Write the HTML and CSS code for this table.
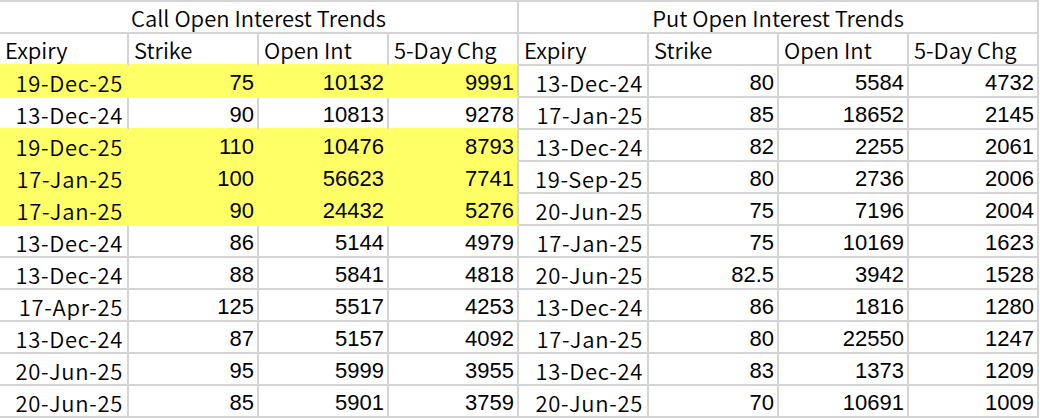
FILE: index.html
```html
<!DOCTYPE html>
<html>
<head>
<meta charset="utf-8">
<link rel="stylesheet" href="styles.css">
</head>
<body>
<div class="sheet">
  <div class="cell title">Call Open Interest Trends</div>
  <div class="cell title">Put Open Interest Trends</div>

  <div class="cell head ab">Expiry</div>
  <div class="cell head ab">Strike</div>
  <div class="cell head ab">Open Int</div>
  <div class="cell head ab">5-Day Chg</div>
  <div class="cell head">Expiry</div>
  <div class="cell head">Strike</div>
  <div class="cell head">Open Int</div>
  <div class="cell head">5-Day Chg</div>

  <div class="cell date hl">19-Dec-25</div><div class="cell num hl">75</div><div class="cell num hl">10132</div><div class="cell num hl edge">9991</div>
  <div class="cell date">13-Dec-24</div><div class="cell num">80</div><div class="cell num">5584</div><div class="cell num">4732</div>

  <div class="cell date ab">13-Dec-24</div><div class="cell num ab">90</div><div class="cell num ab">10813</div><div class="cell num ab">9278</div>
  <div class="cell date">17-Jan-25</div><div class="cell num">85</div><div class="cell num">18652</div><div class="cell num">2145</div>

  <div class="cell date hl">19-Dec-25</div><div class="cell num hl">110</div><div class="cell num hl">10476</div><div class="cell num hl edge">8793</div>
  <div class="cell date">13-Dec-24</div><div class="cell num">82</div><div class="cell num">2255</div><div class="cell num">2061</div>

  <div class="cell date hl">17-Jan-25</div><div class="cell num hl">100</div><div class="cell num hl">56623</div><div class="cell num hl edge">7741</div>
  <div class="cell date">19-Sep-25</div><div class="cell num">80</div><div class="cell num">2736</div><div class="cell num">2006</div>

  <div class="cell date hl">17-Jan-25</div><div class="cell num hl">90</div><div class="cell num hl">24432</div><div class="cell num hl edge">5276</div>
  <div class="cell date">20-Jun-25</div><div class="cell num">75</div><div class="cell num">7196</div><div class="cell num">2004</div>

  <div class="cell date">13-Dec-24</div><div class="cell num">86</div><div class="cell num">5144</div><div class="cell num">4979</div>
  <div class="cell date">17-Jan-25</div><div class="cell num">75</div><div class="cell num">10169</div><div class="cell num">1623</div>

  <div class="cell date">13-Dec-24</div><div class="cell num">88</div><div class="cell num">5841</div><div class="cell num">4818</div>
  <div class="cell date">20-Jun-25</div><div class="cell num">82.5</div><div class="cell num">3942</div><div class="cell num">1528</div>

  <div class="cell date">17-Apr-25</div><div class="cell num">125</div><div class="cell num">5517</div><div class="cell num">4253</div>
  <div class="cell date">13-Dec-24</div><div class="cell num">86</div><div class="cell num">1816</div><div class="cell num">1280</div>

  <div class="cell date">13-Dec-24</div><div class="cell num">87</div><div class="cell num">5157</div><div class="cell num">4092</div>
  <div class="cell date">17-Jan-25</div><div class="cell num">80</div><div class="cell num">22550</div><div class="cell num">1247</div>

  <div class="cell date">20-Jun-25</div><div class="cell num">95</div><div class="cell num">5999</div><div class="cell num">3955</div>
  <div class="cell date">13-Dec-24</div><div class="cell num">83</div><div class="cell num">1373</div><div class="cell num">1209</div>

  <div class="cell date">20-Jun-25</div><div class="cell num">85</div><div class="cell num">5901</div><div class="cell num">3759</div>
  <div class="cell date">20-Jun-25</div><div class="cell num">70</div><div class="cell num">10691</div><div class="cell num">1009</div>
</div>
</body>
</html>
```

FILE: styles.css
```css
html, body {
  margin: 0;
  padding: 0;
  background: #ffffff;
}

.sheet {
  display: grid;
  grid-template-columns: 129px repeat(7, 130px);
  grid-template-rows: 34px;
  grid-auto-rows: 32px;
  width: 1039px;
  color: #000000;
}

.cell {
  box-sizing: border-box;
  height: 32px;
  border-right: 2px solid #d4d4d4;
  border-bottom: 2px solid #d4d4d4;
  font-size: 22px;
  white-space: nowrap;
  overflow: hidden;
}

.title {
  grid-column: span 4;
  height: 34px;
  border-top: 2px solid #d4d4d4;
  text-align: center;
  font-family: "Noto Sans CJK SC", "Noto Sans", sans-serif;
  font-weight: 350;
  line-height: 24px;
  padding-top: 3px;
}

.head {
  font-family: "Noto Sans CJK SC", "Noto Sans", sans-serif;
  font-weight: 350;
  text-align: left;
  padding-left: 5px;
  line-height: 24px;
  padding-top: 3px;
}

.date {
  font-family: "Noto Sans CJK SC", "Noto Sans", sans-serif;
  font-weight: 350;
  text-align: right;
  padding-right: 4px;
  letter-spacing: 0.7px;
  line-height: 24px;
  padding-top: 4px;
}

.num {
  font-family: "Liberation Sans", Arial, sans-serif;
  text-align: right;
  padding-right: 3px;
  line-height: 24px;
  padding-top: 5px;
}

.hl {
  background: #ffff66;
  border-right-color: #ffff66;
  border-bottom-color: #ffff66;
}

.hl.edge {
  border-right-color: #d4d4d4;
}

.ab {
  border-bottom-color: #ffff66;
}
```
